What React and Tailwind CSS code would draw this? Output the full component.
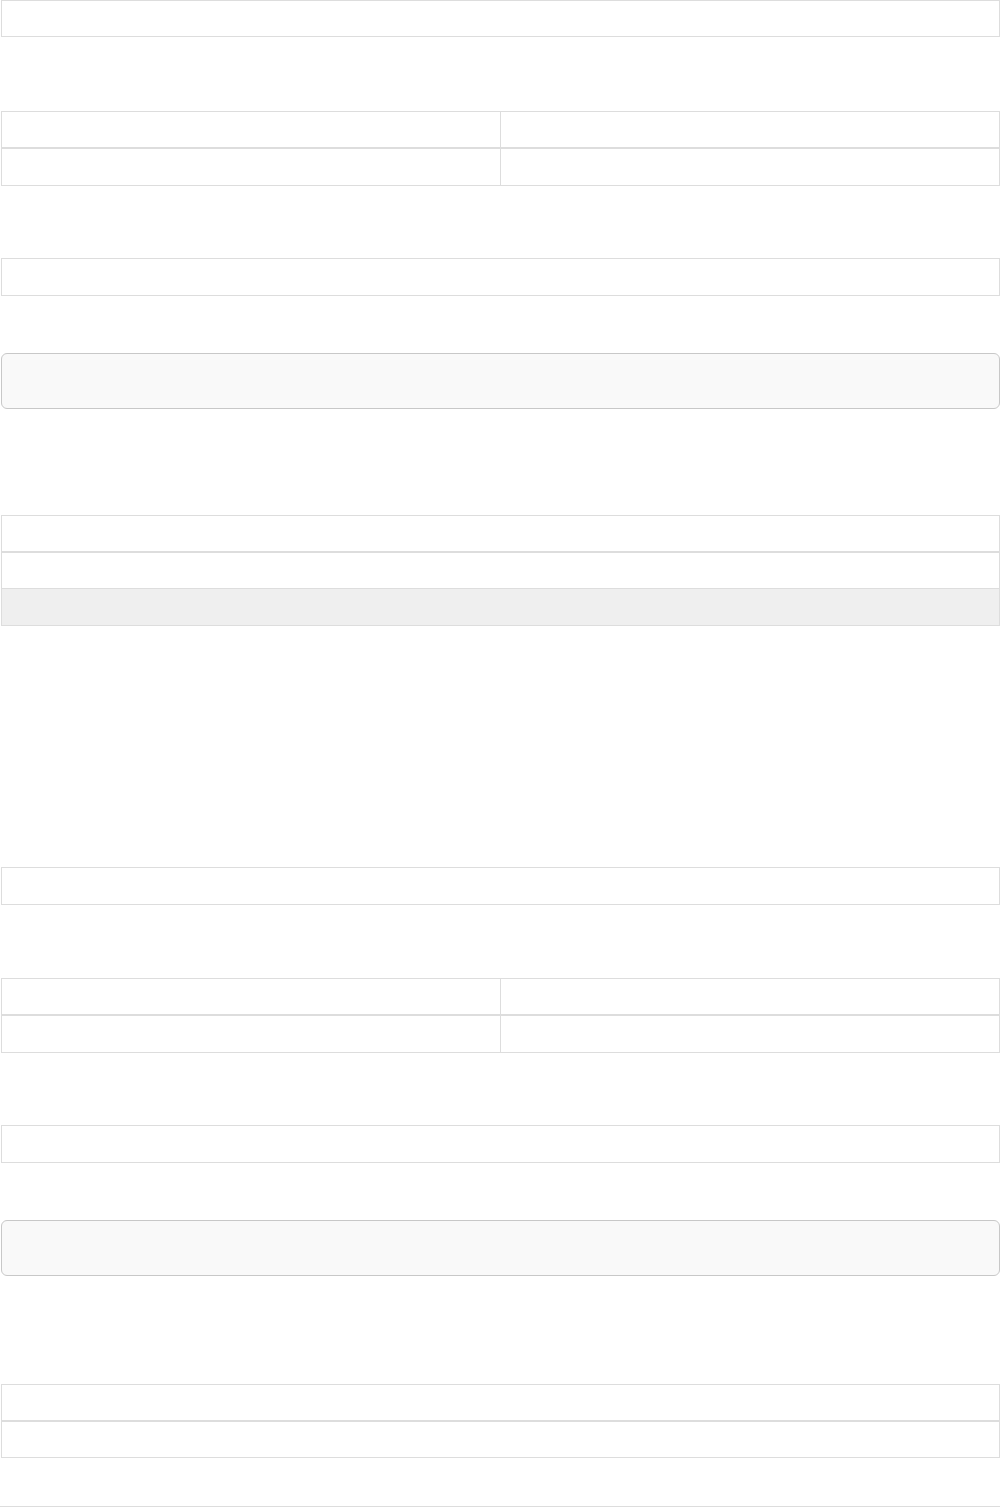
import React from 'react';

// empty bordered grid, like a bootstrap table with no data yet
// heights are border-box, so they include the row's own border
const Grid = ({ cols = 1, head = false, rows = [], className = '' }) => (
  <div className={`border border-[#dddddd] bg-white ${className}`}>
    {head && (
      <div className="flex h-[37px] border-b-2 border-[#dddddd]">
        {Array.from({ length: cols }).map((_, i) => (
          <div key={i} className={`flex-1 ${i > 0 ? 'border-l border-[#dddddd]' : ''}`} />
        ))}
      </div>
    )}
    {rows.map((row, r) => (
      <div
        key={r}
        className={`flex ${row.h} ${row.shade ? 'bg-[#efefef]' : ''} ${r > 0 ? 'border-t border-[#dddddd]' : ''}`}
      >
        {Array.from({ length: cols }).map((_, i) => (
          <div key={i} className={`flex-1 ${i > 0 ? 'border-l border-[#dddddd]' : ''}`} />
        ))}
      </div>
    ))}
  </div>
);

const CodeBox = ({ className = '' }) => (
  <div className={`h-[56px] rounded-[6px] border border-[#c8c8c8] bg-[#f9f9f9] ${className}`} />
);

const App = () => {
  return (
    <div className="min-h-screen w-[1000px] bg-white font-['Liberation_Sans',sans-serif] text-sm text-[#333333]">
      <div className="ml-px w-[999px]">
        {/* first block */}
        <Grid rows={[{ h: 'h-[35px]' }]} />
        <Grid cols={2} head rows={[{ h: 'h-[36px]' }]} className="mt-[74px]" />
        <Grid rows={[{ h: 'h-[36px]' }]} className="mt-[72px]" />
        <CodeBox className="mt-[57px]" />
        <Grid
          head
          rows={[{ h: 'h-[35px]' }, { h: 'h-[37px]', shade: true }]}
          className="mt-[106px]"
        />

        {/* second block */}
        <Grid rows={[{ h: 'h-[36px]' }]} className="mt-[241px]" />
        <Grid cols={2} head rows={[{ h: 'h-[36px]' }]} className="mt-[73px]" />
        <Grid rows={[{ h: 'h-[36px]' }]} className="mt-[72px]" />
        <CodeBox className="mt-[57px]" />
        <Grid head rows={[{ h: 'h-[35px]' }]} className="mt-[108px]" />
      </div>
      <div className="mt-[48px] border-t border-[#dddddd]" />
    </div>
  );
};

export default App;
